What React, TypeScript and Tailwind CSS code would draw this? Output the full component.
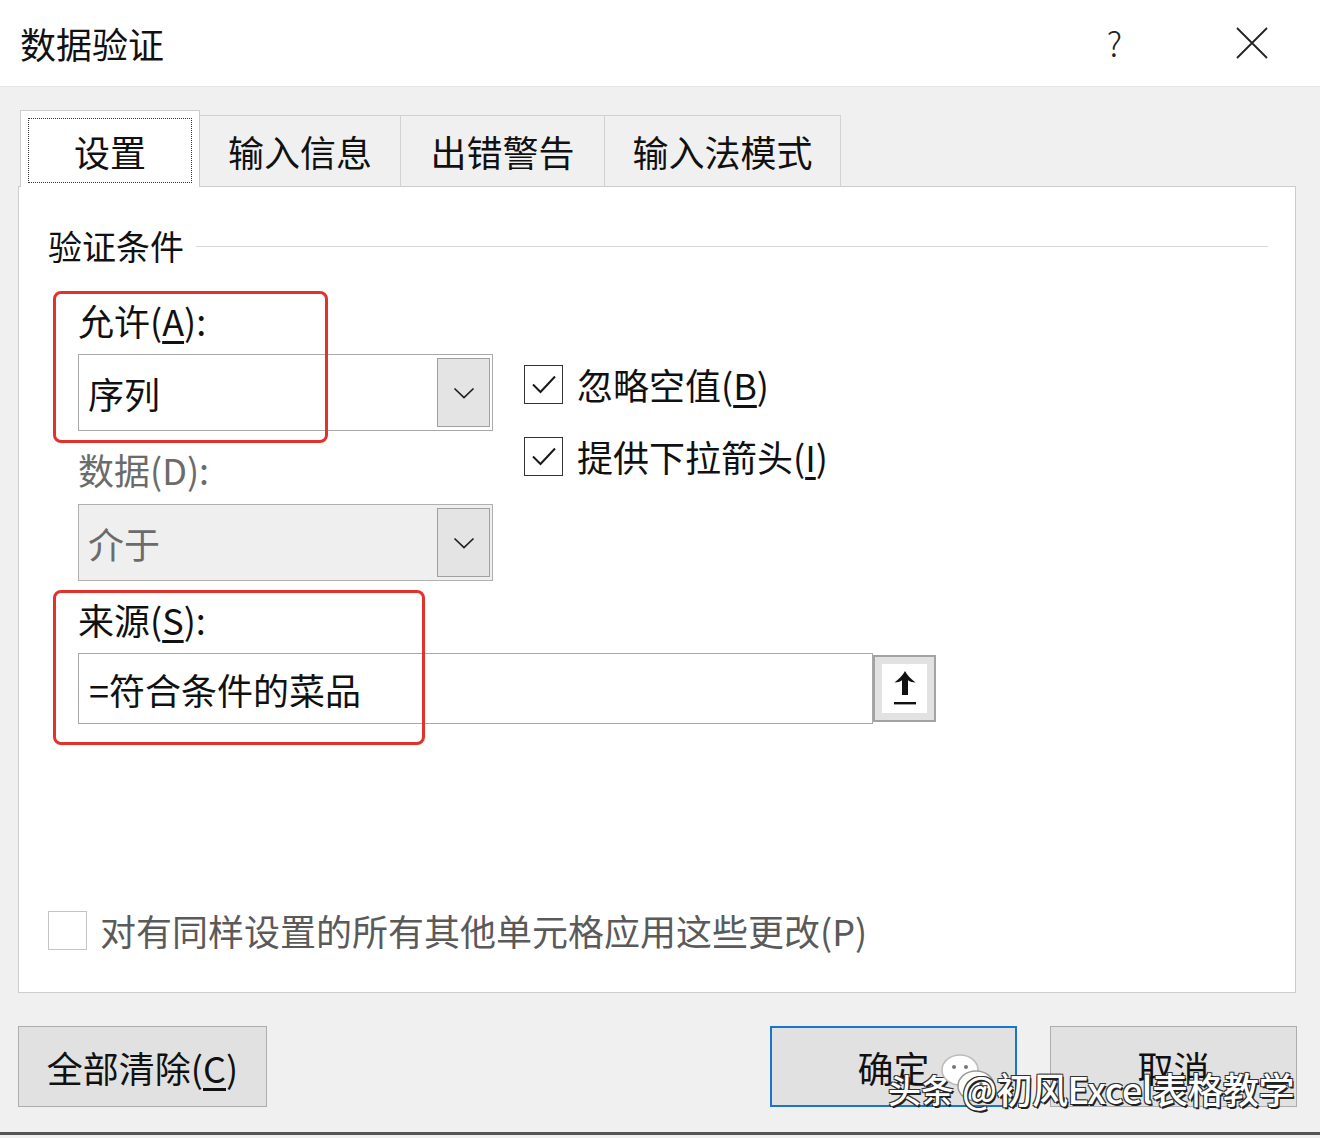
import clsx from "clsx";

const cn = clsx;
const FONT = "font-['Noto_Sans_CJK_SC','Noto_Sans',sans-serif]";

function Chevron() {
  return (
    <svg width="22" height="12" viewBox="0 0 22 12" fill="none">
      <path d="M1.5 1.5l9.5 9 9.5-9" stroke="#1f1f1f" strokeWidth="1.7" />
    </svg>
  );
}

function Check() {
  return (
    <svg width="28" height="22" viewBox="0 0 28 22" fill="none">
      <path d="M3 11.5l7.5 7.5L25 3.5" stroke="#1a1a1a" strokeWidth="2" />
    </svg>
  );
}

function Combo({ value, disabled = false }: { value: string; disabled?: boolean }) {
  return (
    <div
      className={cn(
        "flex h-[77px] w-[415px] border py-[3px] pr-[2px]",
        disabled ? "border-[#b0b0b0] bg-[#efefef]" : "border-[#a8a8a8] bg-white"
      )}
    >
      <div
        className={cn(
          "flex flex-1 items-center pl-[9px] text-[36px] leading-none",
          disabled ? "text-[#6b6b6b]" : "text-[#111]"
        )}
      >
        {value}
      </div>
      <div className="flex w-[53px] items-center justify-center border border-[#a0a0a0] bg-[#e4e4e4]">
        <Chevron />
      </div>
    </div>
  );
}

function CheckRow({ label, mnemonic }: { label: string; mnemonic: string }) {
  return (
    <div className="flex h-[40px] items-center">
      <div className="flex h-[39px] w-[39px] items-center justify-center border-[1.5px] border-[#333] bg-white">
        <Check />
      </div>
      <span className="ml-[14px] text-[36px] leading-none text-[#111]">
        {label}(<u className="underline-offset-[5px]">{mnemonic}</u>)
      </span>
    </div>
  );
}

function UploadButton() {
  return (
    <div className="flex h-[67px] w-[63px] items-center justify-center border-2 border-[#a3a3a3] bg-[#e2e2e2]">
      <div className="flex h-[49px] w-[45px] items-center justify-center bg-white">
        <svg width="28" height="40" viewBox="0 0 28 40">
          <path
            d="M14 2C12 6 8 10 3.5 13.5c3 0 5.5-.8 7.5-2.2V26h6V11.3c2 1.4 4.5 2.2 7.5 2.2C20 10 16 6 14 2z"
            fill="#111"
          />
          <rect x="3" y="33" width="22" height="2.4" fill="#111" />
        </svg>
      </div>
    </div>
  );
}

export default function App() {
  return (
    <div className={cn("relative flex h-[1138px] w-[1320px] flex-col overflow-hidden bg-[#f0f0f0]", FONT)}>
      {/* 标题栏 */}
      <div className="flex h-[87px] shrink-0 items-center border-b border-[#e6e6e6] bg-white pl-[20px] pr-[52px]">
        <span className="text-[36px] leading-none text-[#111]">数据验证</span>
        <span className="ml-auto text-[34px] font-light leading-none text-[#222]">?</span>
        <svg className="ml-[114px]" width="32" height="32" viewBox="0 0 32 32">
          <path d="M1 1l30 30M31 1L1 31" stroke="#222" strokeWidth="1.8" />
        </svg>
      </div>

      <div className="flex flex-col pl-[18px] pr-[24px] pt-[23px]">
        {/* 选项卡 */}
        <div className="flex items-end pl-[2px]">
          <div className="relative z-10 -mb-px flex h-[77px] w-[180px] border border-b-0 border-[#cdcdcd] bg-white px-[7px] pb-[4px] pt-[7px]">
            <div className="flex flex-1 items-center justify-center border border-dotted border-[#333] text-[36px] leading-none text-[#111]">
              设置
            </div>
          </div>
          <div className="flex h-[71px] w-[201px] items-center justify-center border-r border-t border-[#d2d2d2] text-[36px] leading-none text-[#111]">
            输入信息
          </div>
          <div className="flex h-[71px] w-[204px] items-center justify-center border-r border-t border-[#d2d2d2] text-[36px] leading-none text-[#111]">
            出错警告
          </div>
          <div className="flex h-[71px] w-[236px] items-center justify-center border-r border-t border-[#d2d2d2] text-[36px] leading-none text-[#111]">
            输入法模式
          </div>
        </div>

        {/* 设置面板 */}
        <div className="relative flex h-[807px] flex-col border border-[#cdcdcd] bg-white px-[29px] pt-[39px]">
          <div className="flex h-[40px] items-center">
            <span className="text-[34px] leading-none text-[#111]">验证条件</span>
            <div className="ml-[12px] mr-[-2px] h-px flex-1 bg-[#d6d6d6]" />
          </div>

          <div className="ml-[30px] mt-[34px] flex">
            <div className="flex w-[415px] flex-col">
              <div className="flex h-[40px] items-center text-[36px] leading-none text-[#111]">
                允许(<u className="underline-offset-[5px]">A</u>):
              </div>
              <div className="mt-[14px]">
                <Combo value="序列" />
              </div>
              <div className="mt-[18px] flex h-[40px] items-center text-[36px] leading-none text-[#6b6b6b]">
                数据(D):
              </div>
              <div className="mt-[15px]">
                <Combo value="介于" disabled />
              </div>
            </div>
            <div className="ml-[31px] flex flex-col gap-[32px] pt-[64px]">
              <CheckRow label="忽略空值" mnemonic="B" />
              <CheckRow label="提供下拉箭头" mnemonic="I" />
            </div>
          </div>

          <div className="ml-[30px] mt-[18px] flex h-[40px] items-center text-[36px] leading-none text-[#111]">
            来源(<u className="underline-offset-[5px]">S</u>):
          </div>
          <div className="ml-[30px] mt-[14px] flex items-center">
            <div className="flex h-[71px] w-[795px] items-center border border-[#a8a8a8] bg-white pl-[10px] text-[36px] leading-none text-[#111]">
              =符合条件的菜品
            </div>
            <UploadButton />
          </div>

          <div className="mb-[42px] mt-auto flex h-[40px] items-center">
            <div className="h-[39px] w-[39px] border border-[#c4c4c4] bg-white" />
            <span className="ml-[13px] text-[36px] leading-none text-[#5a5a5a]">
              对有同样设置的所有其他单元格应用这些更改(P)
            </span>
          </div>

          {/* 红色标注框 */}
          <div className="absolute left-[34px] top-[104px] h-[152px] w-[275px] rounded-[8px] border-[3px] border-[#e1322b]" />
          <div className="absolute left-[34px] top-[403px] h-[155px] w-[372px] rounded-[8px] border-[3px] border-[#e1322b]" />
        </div>

        {/* 按钮 */}
        <div className="mt-[33px] flex items-center">
          <div className="flex h-[81px] w-[249px] items-center justify-center border border-[#adadad] bg-[#e1e1e1] text-[36px] leading-none text-[#111]">
            全部清除(<u className="underline-offset-[5px]">C</u>)
          </div>
          <div className="ml-auto flex h-[81px] w-[247px] items-center justify-center border-2 border-[#1a74d0] bg-[#e1e1e1] text-[36px] leading-none text-[#111]">
            确定
          </div>
          <div className="ml-[33px] mr-[-1px] flex h-[81px] w-[247px] items-center justify-center border border-[#adadad] bg-[#e1e1e1] text-[36px] leading-none text-[#111]">
            取消
          </div>
        </div>
      </div>

      <div className="mb-[3px] mt-auto h-[3px] shrink-0 bg-[#555]" />

      {/* 水印 */}
      <div className="absolute left-[888px] top-[1052px] flex items-end">
        <span className="text-[33px] font-medium leading-none text-white [text-shadow:1.5px_1.5px_0_#222,-1px_-1px_0_#333,1px_-1px_0_#333,-1px_1px_0_#333]">
          头条
        </span>
        <svg className="-ml-[14px] mb-[2px]" width="58" height="52" viewBox="0 0 58 52">
          <ellipse cx="20" cy="18" rx="18" ry="15" fill="#fff" stroke="#bbb" strokeWidth="1.5" />
          <circle cx="14" cy="15" r="2" fill="#777" />
          <circle cx="26" cy="15" r="2" fill="#777" />
          <ellipse cx="36" cy="34" rx="18" ry="15" fill="#fff" stroke="#999" strokeWidth="1.5" />
          <circle cx="31" cy="32" r="1.8" fill="#777" />
          <circle cx="41" cy="32" r="1.8" fill="#777" />
        </svg>
        <span className="-ml-[36px] text-[36px] font-medium leading-none tracking-[-0.5px] text-white [text-shadow:1.5px_1.5px_0_#222,-1px_-1px_0_#333,1px_-1px_0_#333,-1px_1px_0_#333]">
          @初风Excel表格教学
        </span>
      </div>
    </div>
  );
}
